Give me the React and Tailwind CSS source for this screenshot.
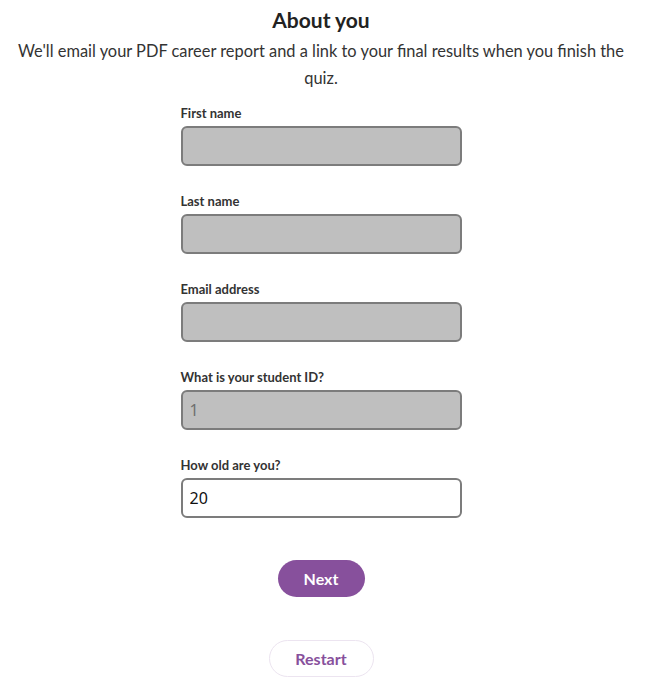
import React from 'react';

const fields = [
  { label: 'First name', value: '', disabled: true },
  { label: 'Last name', value: '', disabled: true },
  { label: 'Email address', value: '', disabled: true },
  { label: 'What is your student ID?', value: '1', disabled: true },
  { label: 'How old are you?', value: '20', disabled: false },
];

const App = () => {
  return (
    <div className="min-h-screen bg-white text-[#333] font-['Lato',sans-serif]">
      <div className="w-[642px] flex flex-col items-center">
        <h1 className="mt-[5px] text-[21px] leading-[30px] font-bold text-[#222]">About you</h1>
        <p className="mt-[2px] w-[620px] text-center text-[16.4px] leading-[27px] text-[#333]">
          We'll email your PDF career report and a link to your final results when you finish the quiz.
        </p>

        <div className="mt-[14px] w-[281px] flex flex-col gap-[27px]">
          {fields.map((f, i) => (
            <div key={i} className="flex flex-col">
              <label className="text-[13px] leading-[16px] font-bold text-[#333] mb-[5px]">{f.label}</label>
              <input
                type="text"
                readOnly
                value={f.value}
                className={
                  'h-[40px] w-full rounded-[6px] border-2 px-[7px] text-[16px] outline-none font-["Noto_Sans",sans-serif] ' +
                  (f.disabled
                    ? 'bg-[#bfbfbf] border-[#7c7c7c] text-[#6f6f6f]'
                    : 'bg-white border-[#7c7c7c] text-[#111]')
                }
              />
            </div>
          ))}
        </div>

        <button
          type="button"
          className="mt-[42px] h-[37px] w-[87px] rounded-full bg-[#87509c] text-white font-bold text-[16px]"
        >
          Next
        </button>

        <button
          type="button"
          className="mt-[43px] h-[37px] w-[105px] rounded-full bg-white border border-[#ece4f0] text-[#87509c] font-bold text-[16px]"
        >
          Restart
        </button>
      </div>
    </div>
  );
};

export default App;
